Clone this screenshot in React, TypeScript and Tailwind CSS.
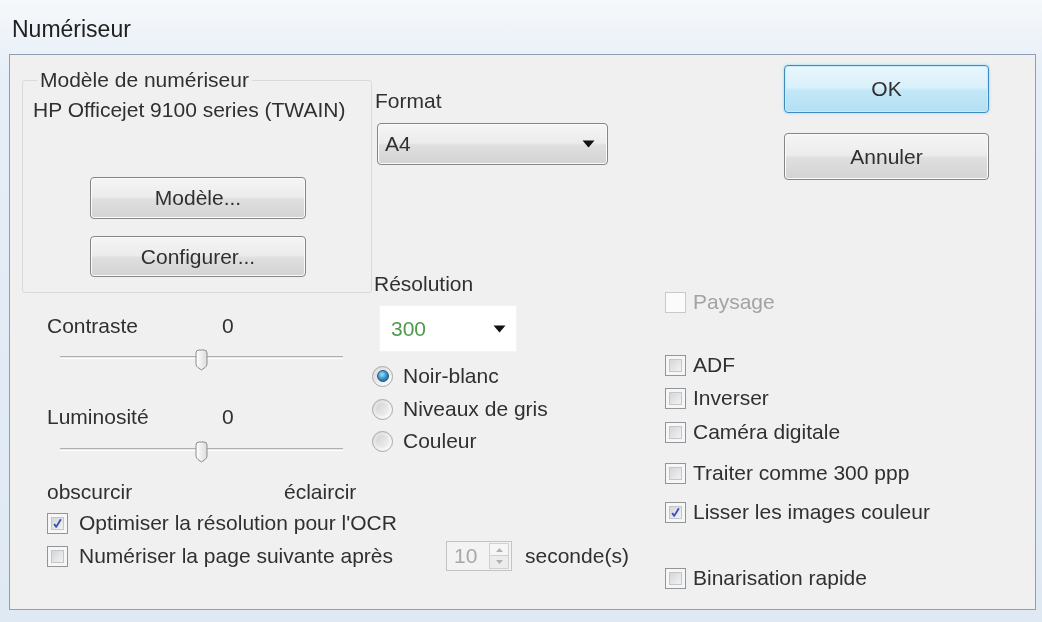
import React from "react";

function WinButton({ children, className = "" }: { children: React.ReactNode; className?: string }) {
  return (
    <div
      className={`flex items-center justify-center rounded-[4px] border border-[#858585] bg-[linear-gradient(#f5f5f5,#ececec_47%,#dfdfdf_53%,#d3d3d3)] shadow-[inset_0_0_0_1px_#fbfbfb] ${className}`}
    >
      {children}
    </div>
  );
}

function Check({ checked = false, disabled = false }: { checked?: boolean; disabled?: boolean }) {
  if (disabled) {
    return <div className="w-[21px] h-[21px] shrink-0 border border-[#c9c9c9] bg-[#fbfbfb]" />;
  }
  return (
    <div className="w-[21px] h-[21px] shrink-0 border border-[#949596] bg-[#f6f6f6] p-[3px]">
      <div className="w-full h-full border border-[#c3c6ca] bg-[linear-gradient(135deg,#d3d6da,#f2f2f2)] flex items-center justify-center">
        {checked && (
          <svg width="13" height="13" viewBox="0 0 13 13">
            <path d="M2.5 7 L5 10.5 L10.5 1.5" fill="none" stroke="#3a4fb8" strokeWidth="2.2" strokeLinejoin="round" />
          </svg>
        )}
      </div>
    </div>
  );
}

function Radio({ checked = false }: { checked?: boolean }) {
  return (
    <div className="w-[21px] h-[21px] shrink-0 rounded-full border border-[#a8a8a8] bg-[linear-gradient(135deg,#d9d9d9,#ffffff)] flex items-center justify-center">
      {checked ? (
        <div className="w-[12px] h-[12px] rounded-full border border-[#1c5b86] bg-[radial-gradient(circle_at_40%_35%,#a6dcf3,#2c8bc2_55%,#145985)]" />
      ) : (
        <div className="w-[13px] h-[13px] rounded-full bg-[linear-gradient(135deg,#d2d2d2,#f4f4f4)]" />
      )}
    </div>
  );
}

function Slider() {
  return (
    <div className="relative ml-[50px] h-[22px] w-[283px]">
      <div className="absolute left-0 right-0 top-[7px] h-[3px] border-t border-[#b0b0b0] border-b border-b-white bg-[#e6e6e6]" />
      <svg className="absolute left-[134px] top-0" width="15" height="22" viewBox="0 0 15 22">
        <defs>
          <linearGradient id="thumbg" x1="0" y1="0" x2="1" y2="0">
            <stop offset="0" stopColor="#ffffff" />
            <stop offset="1" stopColor="#dcdcdc" />
          </linearGradient>
        </defs>
        <path
          d="M2 4 Q2 1 5 1 H10 Q13 1 13 4 V15 Q13 17 11 18.5 L7.5 21 L4 18.5 Q2 17 2 15 Z"
          fill="url(#thumbg)"
          stroke="#8c8c8c"
          strokeWidth="1"
        />
      </svg>
    </div>
  );
}

function Arrow() {
  return (
    <svg width="13" height="8" viewBox="0 0 13 8">
      <path d="M0.5 0.5 H12.5 L6.5 7.5 Z" fill="#111" />
    </svg>
  );
}

export default function App() {
  return (
    <div className="w-[1042px] h-[622px] overflow-hidden flex flex-col bg-[linear-gradient(#f6f8fb,#e6eef7_12%,#dfe9f4)] font-['Liberation_Sans',Arial,sans-serif] text-[21px] leading-[24px] text-[#303030] blur-[0.5px]">
      <div className="h-[54px] shrink-0 pl-[12px] pt-[16px] text-[23px] leading-[26px] text-[#202020]">Numériseur</div>

      <div className="ml-[9px] w-[1027px] h-[556px] shrink-0 border border-[#909eb2] bg-[#f0f0f0] flex">
        {/* left + middle */}
        <div className="w-[652px] shrink-0 flex flex-col">
          <div className="flex h-[449px] shrink-0">
            {/* left column */}
            <div className="w-[362px] shrink-0 flex flex-col">
              <fieldset className="ml-[12px] mt-[13px] w-[350px] rounded-[3px] border border-[#d9d9d9] pb-[15px] flex flex-col">
                <legend className="ml-[14px] px-[3px]">Modèle de numériseur</legend>
                <div className="ml-[10px] mt-[6px] whitespace-nowrap">HP Officejet 9100 series (TWAIN)</div>
                <WinButton className="ml-[67px] mt-[55px] w-[216px] h-[42px]">Modèle...</WinButton>
                <WinButton className="ml-[67px] mt-[17px] w-[216px] h-[41px]">Configurer...</WinButton>
              </fieldset>

              <div className="mt-[21px] ml-[37px] flex">
                <div className="w-[175px]">Contraste</div>
                <div>0</div>
              </div>
              <div className="mt-[11px]">
                <Slider />
              </div>
              <div className="mt-[34px] ml-[37px] flex">
                <div className="w-[175px]">Luminosité</div>
                <div>0</div>
              </div>
              <div className="mt-[12px]">
                <Slider />
              </div>
              <div className="mt-[17px] ml-[37px] flex">
                <div className="w-[237px]">obscurcir</div>
                <div>éclaircir</div>
              </div>
            </div>

            {/* middle column */}
            <div className="w-[290px] shrink-0 flex flex-col">
              <div className="mt-[34px] ml-[3px]">Format</div>
              <WinButton className="mt-[10px] ml-[5px] w-[231px] h-[42px] !justify-between pl-[7px] pr-[12px]">
                <span>A4</span>
                <Arrow />
              </WinButton>
              <div className="mt-[107px] ml-[2px]">Résolution</div>
              <div className="mt-[9px] ml-[7px] w-[138px] h-[47px] bg-white border border-[#f4f4f4] flex items-center justify-between pl-[11px] pr-[10px]">
                <span className="text-[#4f9a4f]">300</span>
                <Arrow />
              </div>
              <div className="mt-[12px] flex items-center gap-[10px] h-[24px]">
                <Radio checked />
                <span>Noir-blanc</span>
              </div>
              <div className="mt-[9px] flex items-center gap-[10px] h-[24px]">
                <Radio />
                <span>Niveaux de gris</span>
              </div>
              <div className="mt-[8px] flex items-center gap-[10px] h-[24px]">
                <Radio />
                <span>Couleur</span>
              </div>
            </div>
          </div>

          {/* bottom rows */}
          <div className="mt-[7px] ml-[37px] h-[24px] flex items-center gap-[11px]">
            <Check checked />
            <span className="whitespace-nowrap">Optimiser la résolution pour l'OCR</span>
          </div>
          <div className="mt-[9px] ml-[37px] h-[24px] flex items-center">
            <div className="w-[399px] shrink-0 flex items-center gap-[11px]">
              <Check />
              <span className="whitespace-nowrap">Numériser la page suivante après</span>
            </div>
            <div className="h-[30px] w-[66px] shrink-0 border border-[#c3c3c3] bg-[#f3f3f3] flex items-center justify-between pl-[7px] pr-[2px]">
              <span className="text-[#a8a8a8]">10</span>
              <div className="flex flex-col h-[26px] w-[20px] border border-[#d0d0d0]">
                <div className="h-1/2 flex items-center justify-center border-b border-[#d0d0d0] bg-[#f6f6f6]">
                  <svg width="7" height="4" viewBox="0 0 7 4"><path d="M0 4 L3.5 0 L7 4 Z" fill="#b0b0b0" /></svg>
                </div>
                <div className="h-1/2 flex items-center justify-center bg-[#ececec]">
                  <svg width="7" height="4" viewBox="0 0 7 4"><path d="M0 0 L3.5 4 L7 0 Z" fill="#b0b0b0" /></svg>
                </div>
              </div>
            </div>
            <span className="ml-[13px] whitespace-nowrap">seconde(s)</span>
          </div>
        </div>

        {/* right column */}
        <div className="flex-1 flex flex-col">
          <div
            className="mt-[10px] ml-[122px] w-[205px] h-[48px] flex items-center justify-center rounded-[4px] border border-[#3c8cc0] bg-[linear-gradient(#e9f6fd,#d9f0fb_47%,#c3e8f8_53%,#b3dff3)] shadow-[inset_0_0_0_1px_#c8ecfb,0_0_3px_#8fd3f5]"
          >
            OK
          </div>
          <WinButton className="mt-[20px] ml-[122px] w-[205px] h-[47px]">Annuler</WinButton>

          <div className="mt-[110px] ml-[3px] h-[24px] flex items-center gap-[7px]">
            <Check disabled />
            <span className="text-[#a3a3a3]">Paysage</span>
          </div>
          <div className="mt-[39px] ml-[3px] h-[24px] flex items-center gap-[7px]">
            <Check />
            <span>ADF</span>
          </div>
          <div className="mt-[9px] ml-[3px] h-[24px] flex items-center gap-[7px]">
            <Check />
            <span>Inverser</span>
          </div>
          <div className="mt-[10px] ml-[3px] h-[24px] flex items-center gap-[7px]">
            <Check />
            <span>Caméra digitale</span>
          </div>
          <div className="mt-[17px] ml-[3px] h-[24px] flex items-center gap-[7px]">
            <Check />
            <span>Traiter comme 300 ppp</span>
          </div>
          <div className="mt-[15px] ml-[3px] h-[24px] flex items-center gap-[7px]">
            <Check checked />
            <span>Lisser les images couleur</span>
          </div>
          <div className="mt-[42px] ml-[3px] h-[24px] flex items-center gap-[7px]">
            <Check />
            <span>Binarisation rapide</span>
          </div>
        </div>
      </div>
    </div>
  );
}
